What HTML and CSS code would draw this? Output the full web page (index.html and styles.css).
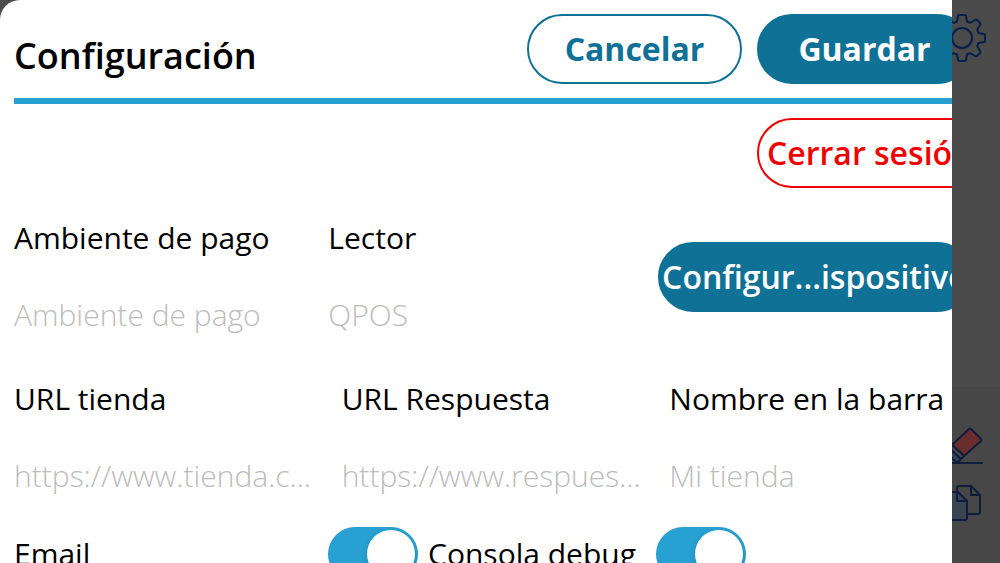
FILE: index.html
```html
<!DOCTYPE html>
<html lang="es">
<head>
<meta charset="utf-8">
<meta name="viewport" content="width=device-width, initial-scale=1">
<title>Configuración</title>
<link rel="stylesheet" href="styles.css">
</head>
<body>
<div class="app">
  <div class="app-top">
    <svg class="icon" viewBox="-24 -24 48 48" aria-hidden="true">
      <path d="M-5-16.500-4-22q0-1 1-1h6q1 0 1 1l1 5.500 3.100 1.300L13-18q1-1 2 0l3 3q1 1 0 2l-2.800 4.900L16.500-5 22-4q1 0 1 1v6q0 1-1 1l-5.500 1-1.300 3.100L18 13q1 1 0 2l-3 3q-1 1-2 0l-4.900-2.800L5 16.500 4 22q0 1-1 1h-6q-1 0-1-1l-1-5.500-3.100-1.300L-13 18q-1 1-2 0l-3-3q-1-1 0-2l2.800-4.900L-16.500 5-22 4q-1 0-1-1v-6q0-1 1-1l5.500-1 1.300-3.100L-18-13q-1-1 0-2l3-3q1-1 2 0l4.900 2.800z"/>
      <circle r="10"/>
    </svg>
  </div>
  <div class="app-tools">
    <svg class="icon" viewBox="0 0 48 48" aria-hidden="true">
      <path class="red" d="M16 24 33 8q1-1 2 0l10 10q1 1 0 2L28 35z"/>
      <path class="pale" d="m16 24 12 11-3 3-12-11z"/>
      <path class="blue" d="m13 27 12 11-2 2q-2 2-4 0l-9-9z"/>
      <path d="M2 42h44"/>
    </svg>
    <svg class="icon" viewBox="0 0 48 48" aria-hidden="true">
      <path d="M21 11V7q0-2 2-2h12l9 9v17q0 2-2 2H32M35 5v9h9"/>
      <path class="gray" d="M8 11h14l9 9v17q0 2-2 2H8z"/>
      <path d="M21 11v9h10"/>
    </svg>
  </div>
</div>
<main class="panel">
  <form class="settings">
    <header class="header">
      <h1 class="title">Configuración</h1>
      <button class="button outline" type="button">Cancelar</button>
      <button class="button" type="submit">Guardar</button>
    </header>
    <hr class="rule">
    <button class="button danger" type="button">Cerrar sesión</button>
    <div class="row device-row">
      <div class="pair">
        <div class="field">
          <label class="label" for="env">Ambiente de pago</label>
          <input class="input" id="env" type="text" placeholder="Ambiente de pago">
        </div>
        <div class="field">
          <label class="label" for="reader">Lector</label>
          <input class="input" id="reader" type="text" placeholder="QPOS">
        </div>
      </div>
      <button class="button wide" type="button">Configur...ispositivo</button>
    </div>
    <div class="row url-row">
      <div class="field">
        <label class="label" for="shop">URL tienda</label>
        <input class="input" id="shop" type="text" placeholder="https://www.tienda.c...">
      </div>
      <div class="field">
        <label class="label" for="reply">URL Respuesta</label>
        <input class="input" id="reply" type="text" placeholder="https://www.respues...">
      </div>
      <div class="field">
        <label class="label" for="name">Nombre en la barra</label>
        <input class="input" id="name" type="text" placeholder="Mi tienda">
      </div>
    </div>
    <div class="switches">
      <label class="switch-label" for="email">Email</label>
      <input class="switch" id="email" type="checkbox" role="switch" checked>
      <label class="switch-label" for="debug">Consola debug</label>
      <input class="switch" id="debug" type="checkbox" role="switch" checked>
    </div>
  </form>
</main>
</body>
</html>
```
FILE: styles.css
```css
* { box-sizing: border-box; }

body {
  margin: 0;
  height: 100vh;
  overflow: hidden;
  position: relative;
  background: #4b4b4b;
  color: #000;
  font: 400 30px/40px "Open Sans", "Noto Sans", sans-serif;
}

/* Dimmed page behind the panel */
.app {
  display: flex;
  flex-direction: column;
  height: 100%;
}

.app-top {
  flex: 0 0 387px;
  padding: 14px;
  display: flex;
  justify-content: flex-end;
  align-items: flex-start;
}

.app-tools {
  flex: 1;
  padding: 34px 16px;
  display: flex;
  flex-direction: column;
  align-items: flex-end;
  gap: 12px;
  background: #474747;
}

.icon {
  width: 48px;
  height: 48px;
  fill: none;
  stroke: #071f4b;
  stroke-width: 2;
  stroke-linejoin: round;
  stroke-linecap: round;
}

.app-tools .icon { stroke: #101c3c; }

.icon .red { fill: #6a2d2d; }
.icon .pale { fill: #4b4b4b; }
.icon .blue { fill: #2c4858; }
.icon .gray { fill: #3b4552; }

/* Settings panel */
.panel {
  position: absolute;
  inset: 0 48px 0 0;
  overflow: hidden;
  background: #fff;
  border-top-left-radius: 20px;
}

.settings {
  width: calc(100% + 20px);
  padding: 14px 0 14px 14px;
  display: flex;
  flex-direction: column;
}

.header {
  display: flex;
  align-items: center;
  gap: 15px;
}

.title {
  flex: 1;
  margin: 0;
  padding-top: 14px;
  font-size: 36px;
  line-height: 48px;
  font-weight: 600;
}

.rule {
  width: 100%;
  height: 6px;
  margin: 14px 0;
  border: 0;
  background: #28a0d2;
}

.button {
  flex: none;
  width: 215px;
  height: 70px;
  padding: 0;
  border: 2px solid #0f7196;
  border-radius: 35px;
  background: #0f7196;
  color: #fff;
  font: inherit;
  font-size: 32px;
  font-weight: 700;
  white-space: nowrap;
}

.outline {
  background: #fff;
  color: #0f7196;
}

.danger {
  width: 235px;
  margin-right: -20px;
  align-self: flex-end;
  padding-left: 8px;
  border-color: #f00000;
  background: #fff;
  color: #f00000;
  font-weight: 600;
  text-align: left;
}

.wide { width: 100%; font-weight: 600; }

.row {
  display: grid;
  margin-top: 16px;
  align-items: center;
}

.device-row {
  grid-template-columns: 2fr 1fr;
  column-gap: 15px;
}

.pair {
  display: grid;
  grid-template-columns: 1fr 1fr;
}

.url-row {
  grid-template-columns: repeat(3, 1fr);
  column-gap: 15px;
  margin-right: -10px;
}

.field {
  display: flex;
  flex-direction: column;
  gap: 7px;
  min-width: 0;
}

.label {
  line-height: 68px;
  white-space: nowrap;
}

.input {
  width: 100%;
  height: 70px;
  padding: 0;
  border: 0;
  outline: 0;
  background: transparent;
  font: inherit;
  text-overflow: ellipsis;
}

.input::placeholder {
  color: #bcbcbc;
  opacity: 1;
  font-weight: 300;
}

.switches {
  display: grid;
  grid-template-columns: 314px 100px 228px 90px;
  align-items: center;
  margin-top: 17px;
}

.switch-label { white-space: nowrap; }

.switch {
  appearance: none;
  width: 90px;
  height: 54px;
  margin: 0;
  padding: 3px;
  border-radius: 27px;
  background: #28a0d2;
  display: flex;
  justify-content: flex-end;
}

.switch::before {
  content: "";
  width: 48px;
  height: 48px;
  border-radius: 50%;
  background: #fff;
  box-shadow: 0 3px 6px rgba(0, 0, 0, 0.15);
}
```
